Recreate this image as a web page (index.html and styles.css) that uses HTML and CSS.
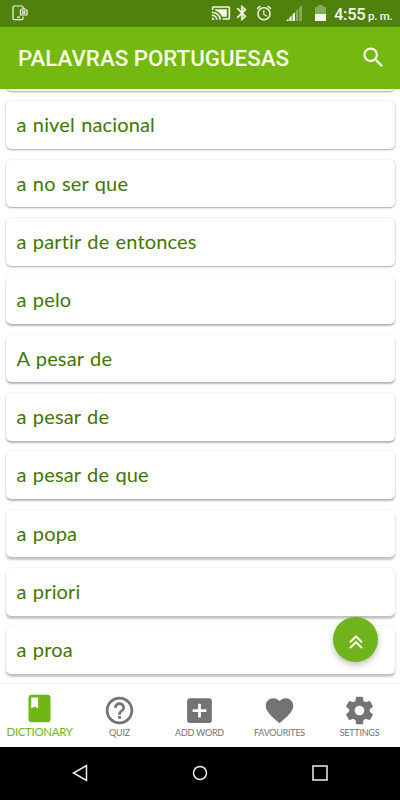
FILE: index.html
```html
<!DOCTYPE html>
<html lang="es">
<head>
    <meta charset="UTF-8">
    <meta name="viewport" content="width=device-width, initial-scale=1.0">
    <title>Palavras Portuguesas</title>
    <link rel="stylesheet" href="styles.css">
</head>
<body>
    <div class="status-bar">
        <svg class="capture" width="17" height="17" viewBox="0 0 17 17" fill="none" stroke="currentColor" stroke-width="1.2">
            <path d="M11 3V2.200Q11 1 9.800 1H2.200Q1 1 1 2.200V13.500Q1 14.700 2.200 14.700H9.800Q11 14.700 11 13.500V11.500M5 12.200H8"/>
            <path d="M8.500 5H9.700L10.500 3.800H12.700L13.500 5H15V10H8.500Z"/>
            <circle cx="11.700" cy="7.400" r="1.200"/>
        </svg>
        <div class="status-icons">
            <svg class="cast" width="20" height="18" viewBox="0 0 24 24" preserveAspectRatio="none" fill="currentColor">
                <path d="M1 18v3h3c0-1.660-1.340-3-3-3zm0-4v2c2.760 0 5 2.240 5 5h2c0-3.870-3.130-7-7-7zm18-7H5v1.630c3.960 1.280 7.090 4.410 8.370 8.370H19V7zM1 10v2c4.970 0 9 4.030 9 9h2c0-6.080-4.930-11-11-11zm20-7H3c-1.100 0-2 .9-2 2v3h2V5h18v14h-7v2h7c1.100 0 2-.9 2-2V5c0-1.100-.9-2-2-2z"/>
            </svg>
            <svg class="bluetooth" width="18" height="18" viewBox="0 0 24 24" fill="currentColor" stroke="currentColor" stroke-width=".5">
                <path d="M17.710 7.710L12 2h-1v7.590L6.410 5 5 6.410 10.590 12 5 17.590 6.410 19 11 14.410V22h1l5.710-5.710-4.300-4.290 4.300-4.290zM13 5.830l1.880 1.880L13 9.590V5.830zm1.880 10.460L13 18.170v-3.760l1.880 1.880z"/>
            </svg>
            <svg class="alarm" width="18" height="18" viewBox="0 0 24 24" fill="currentColor">
                <path d="M22 5.720l-4.600-3.860-1.290 1.530 4.600 3.860L22 5.720zM7.880 3.390L6.600 1.860 2 5.710l1.290 1.530 4.590-3.850zM12.500 8H11v6l4.750 2.850.75-1.230-4-2.370V8zM12 4c-4.970 0-9 4.030-9 9s4.020 9 9 9 9-4.030 9-9-4.030-9-9-9zm0 16c-3.870 0-7-3.130-7-7s3.130-7 7-7 7 3.130 7 7-3.130 7-7 7z"/>
            </svg>
            <svg class="signal" width="16" height="16" viewBox="0 0 16 16" fill="currentColor">
                <path d="M0 16L2.500 13.500V16ZM3.300 12.700L5.600 10.400V16H3.300ZM6.500 9.500L9 7V16H6.500Z"/>
                <path opacity=".35" d="M9.900 6.100L12.300 3.700V16H9.900ZM13.200 2.800L16 0V16H13.200Z"/>
            </svg>
            <svg class="battery" width="11" height="16" viewBox="0 0 11 16" fill="currentColor">
                <path opacity=".35" d="M3 0H8V2H11V9H0V2H3Z"/>
                <path d="M0 9H11V16H0Z"/>
            </svg>
            <div class="clock">4:55 <small>p. m.</small></div>
        </div>
    </div>

    <header class="toolbar">
        <h1>PALAVRAS PORTUGUESAS</h1>
        <svg width="27" height="27" viewBox="0 0 24 24" fill="currentColor">
            <path d="M15.500 14h-.79l-.28-.27C15.410 12.590 16 11.110 16 9.500 16 5.910 13.090 3 9.500 3S3 5.910 3 9.500 5.910 16 9.500 16c1.610 0 3.090-.59 4.230-1.570l.27.28v.79l5 4.990L20.490 19l-4.990-5zm-6 0C7.010 14 5 11.990 5 9.500S7.010 5 9.500 5 14 7.010 14 9.500 11.990 14 9.500 14z"/>
        </svg>
    </header>

    <main class="word-list">
        <div class="card"></div>
        <div class="card">a nivel nacional</div>
        <div class="card">a no ser que</div>
        <div class="card">a partir de entonces</div>
        <div class="card">a pelo</div>
        <div class="card">A pesar de</div>
        <div class="card">a pesar de</div>
        <div class="card">a pesar de que</div>
        <div class="card">a popa</div>
        <div class="card">a priori</div>
        <div class="card">a proa</div>
        <button class="scroll-top">
            <svg width="14" height="14" viewBox="0 0 14 14" fill="none" stroke="currentColor" stroke-width="2">
                <path d="M1 7.300L7 1.500L13 7.300M1 13L7 7.200L13 13"/>
            </svg>
        </button>
    </main>

    <nav class="tabs">
        <a class="tab active">
            <svg width="33" height="33" viewBox="0 0 24 24" fill="currentColor">
                <path d="M18 2H6c-1.100 0-2 .9-2 2v16c0 1.100.9 2 2 2h12c1.100 0 2-.9 2-2V4c0-1.100-.9-2-2-2zM6 4h5v8l-2.500-1.500L6 12V4z"/>
            </svg>
            <span>DICTIONARY</span>
        </a>
        <a class="tab">
            <svg width="33" height="33" viewBox="0 0 24 24" fill="currentColor">
                <path d="M11 18h2v-2h-2v2zm1-16C6.480 2 2 6.480 2 12s4.480 10 10 10 10-4.480 10-10S17.520 2 12 2zm0 18c-4.410 0-8-3.590-8-8s3.590-8 8-8 8 3.590 8 8-3.590 8-8 8zm0-14c-2.210 0-4 1.790-4 4h2c0-1.100.9-2 2-2s2 .9 2 2c0 2-3 1.750-3 5h2c0-2.250 3-2.500 3-5 0-2.210-1.790-4-4-4z"/>
            </svg>
            <span>QUIZ</span>
        </a>
        <a class="tab">
            <svg width="33" height="33" viewBox="0 0 24 24" fill="currentColor">
                <path d="M19 3H5c-1.110 0-2 .9-2 2v14c0 1.100.89 2 2 2h14c1.100 0 2-.9 2-2V5c0-1.100-.9-2-2-2zm-2 10h-4v4h-2v-4H7v-2h4V7h2v4h4v2z"/>
            </svg>
            <span>ADD WORD</span>
        </a>
        <a class="tab">
            <svg width="33" height="33" viewBox="0 0 24 24" fill="currentColor">
                <path d="M12 21.350l-1.450-1.320C5.400 15.360 2 12.280 2 8.500 2 5.420 4.420 3 7.500 3c1.740 0 3.410.81 4.500 2.090C13.090 3.810 14.760 3 16.500 3 19.580 3 22 5.420 22 8.500c0 3.780-3.400 6.860-8.550 11.540L12 21.350z"/>
            </svg>
            <span>FAVOURITES</span>
        </a>
        <a class="tab">
            <svg width="33" height="33" viewBox="0 0 24 24" fill="currentColor">
                <path d="M19.430 12.980c.04-.32.07-.64.07-.98s-.03-.66-.07-.98l2.110-1.650c.19-.15.24-.42.12-.64l-2-3.460c-.12-.22-.39-.3-.61-.22l-2.490 1c-.52-.4-1.080-.73-1.690-.98l-.38-2.650C14.460 2.180 14.250 2 14 2h-4c-.25 0-.46.18-.49.42l-.38 2.650c-.61.25-1.170.59-1.690.98l-2.490-1c-.23-.09-.49 0-.61.22l-2 3.460c-.13.22-.07.49.12.64l2.110 1.650c-.04.32-.07.65-.07.98s.03.66.07.98l-2.110 1.650c-.19.15-.24.42-.12.64l2 3.460c.12.22.39.3.61.22l2.490-1c.52.4 1.080.73 1.690.98l.38 2.650c.03.24.24.42.49.42h4c.25 0 .46-.18.49-.42l.38-2.650c.61-.25 1.170-.59 1.690-.98l2.490 1c.23.09.49 0 .61-.22l2-3.460c.12-.22.07-.49-.12-.64l-2.110-1.650zM12 15.500c-1.930 0-3.500-1.570-3.500-3.500s1.570-3.500 3.500-3.500 3.500 1.570 3.500 3.500-1.570 3.500-3.500 3.500z"/>
            </svg>
            <span>SETTINGS</span>
        </a>
    </nav>

    <div class="system-nav">
        <svg width="16" height="18" viewBox="0 0 16 18"><path d="M14.500 1.500V16.500L1.500 9Z"/></svg>
        <svg width="16" height="16" viewBox="0 0 16 16"><circle cx="8" cy="8" r="6.500"/></svg>
        <svg width="16" height="16" viewBox="0 0 16 16"><rect x="1" y="1" width="14" height="14"/></svg>
    </div>
</body>
</html>
```
FILE: styles.css
```css
* {
    box-sizing: border-box;
}
body {
    margin: 0;
    height: 800px;
    display: flex;
    flex-direction: column;
    overflow: hidden;
    background: #fff;
    font-family: Lato, sans-serif;
}
.status-bar {
    flex: none;
    height: 26.500px;
    display: flex;
    justify-content: space-between;
    align-items: center;
    padding: 0 9px 0 12px;
    background: #4f810c;
    color: #f3f8e8;
}
.capture {
    margin-top: 1px;
}
.status-icons {
    display: flex;
    align-items: center;
}
.bluetooth {
    margin-left: 2px;
}
.alarm {
    margin-left: 4px;
}
.signal {
    margin-left: 13px;
}
.battery {
    margin-left: 13px;
}
.clock {
    width: 57px;
    margin-left: 8px;
    padding-top: 2px;
    font: 500 16.500px Roboto, sans-serif;
    letter-spacing: -0.300px;
    white-space: nowrap;
}
.clock small {
    font-size: 11.500px;
    margin-left: -1px;
}
.toolbar {
    flex: none;
    height: 62.500px;
    display: flex;
    justify-content: space-between;
    align-items: center;
    padding: 0 13px 0 18px;
    background: #73b90f;
    color: #fbffe9;
}
.toolbar h1 {
    margin: 1px 0 0;
    font: 500 22.300px Roboto, sans-serif;
}
.toolbar svg {
    margin-bottom: 1px;
}
.word-list {
    position: relative;
    height: 594px;
    display: flex;
    flex-direction: column;
    justify-content: flex-end;
    gap: 10.730px;
    padding: 0 5.500px 9.200px;
    overflow: hidden;
}
.card {
    flex: none;
    height: 47.600px;
    padding: 0 11px;
    border-radius: 5px;
    background: #fff;
    box-shadow: 0 1px 2px rgba(0, 0, 0, 0.32), 0 0 2px rgba(0, 0, 0, 0.12);
    color: #427500;
    font-size: 20px;
    line-height: 47px;
    letter-spacing: 0.150px;
    word-spacing: 1px;
}
.card:nth-child(n+5) {
    box-shadow: 0 2px 2px rgba(0, 0, 0, 0.28), 0 0 2px rgba(0, 0, 0, 0.12);
}
.card:nth-child(n+9) {
    box-shadow: 0 3px 2px rgba(0, 0, 0, 0.22), 0 0 2px rgba(0, 0, 0, 0.12);
}
.scroll-top {
    position: absolute;
    right: 22px;
    bottom: 21px;
    width: 45px;
    height: 45px;
    padding: 5px 0 0;
    display: flex;
    align-items: center;
    justify-content: center;
    border: none;
    border-radius: 50%;
    background: #6eb41a;
    color: #fbffe9;
    box-shadow: 0 3px 6px rgba(0, 0, 0, 0.25);
}
.tabs {
    flex: none;
    height: 63.500px;
    display: grid;
    grid-template-columns: repeat(5, 1fr);
    border-top: 1px solid #f0f0f0;
}
.tab {
    display: flex;
    flex-direction: column;
    align-items: center;
    padding: 9.500px 1px 0 0;
    color: #737373;
    font-size: 9px;
    line-height: 11px;
    letter-spacing: -0.250px;
}
.tab.active {
    padding-top: 7.500px;
    color: #6fb714;
    font-size: 11.500px;
    line-height: 14px;
    letter-spacing: -0.350px;
}
.system-nav {
    flex: 1;
    display: flex;
    justify-content: center;
    align-items: center;
    gap: 104px;
    background: #000;
    fill: none;
    stroke: #eee;
    stroke-width: 1.500px;
}
```
